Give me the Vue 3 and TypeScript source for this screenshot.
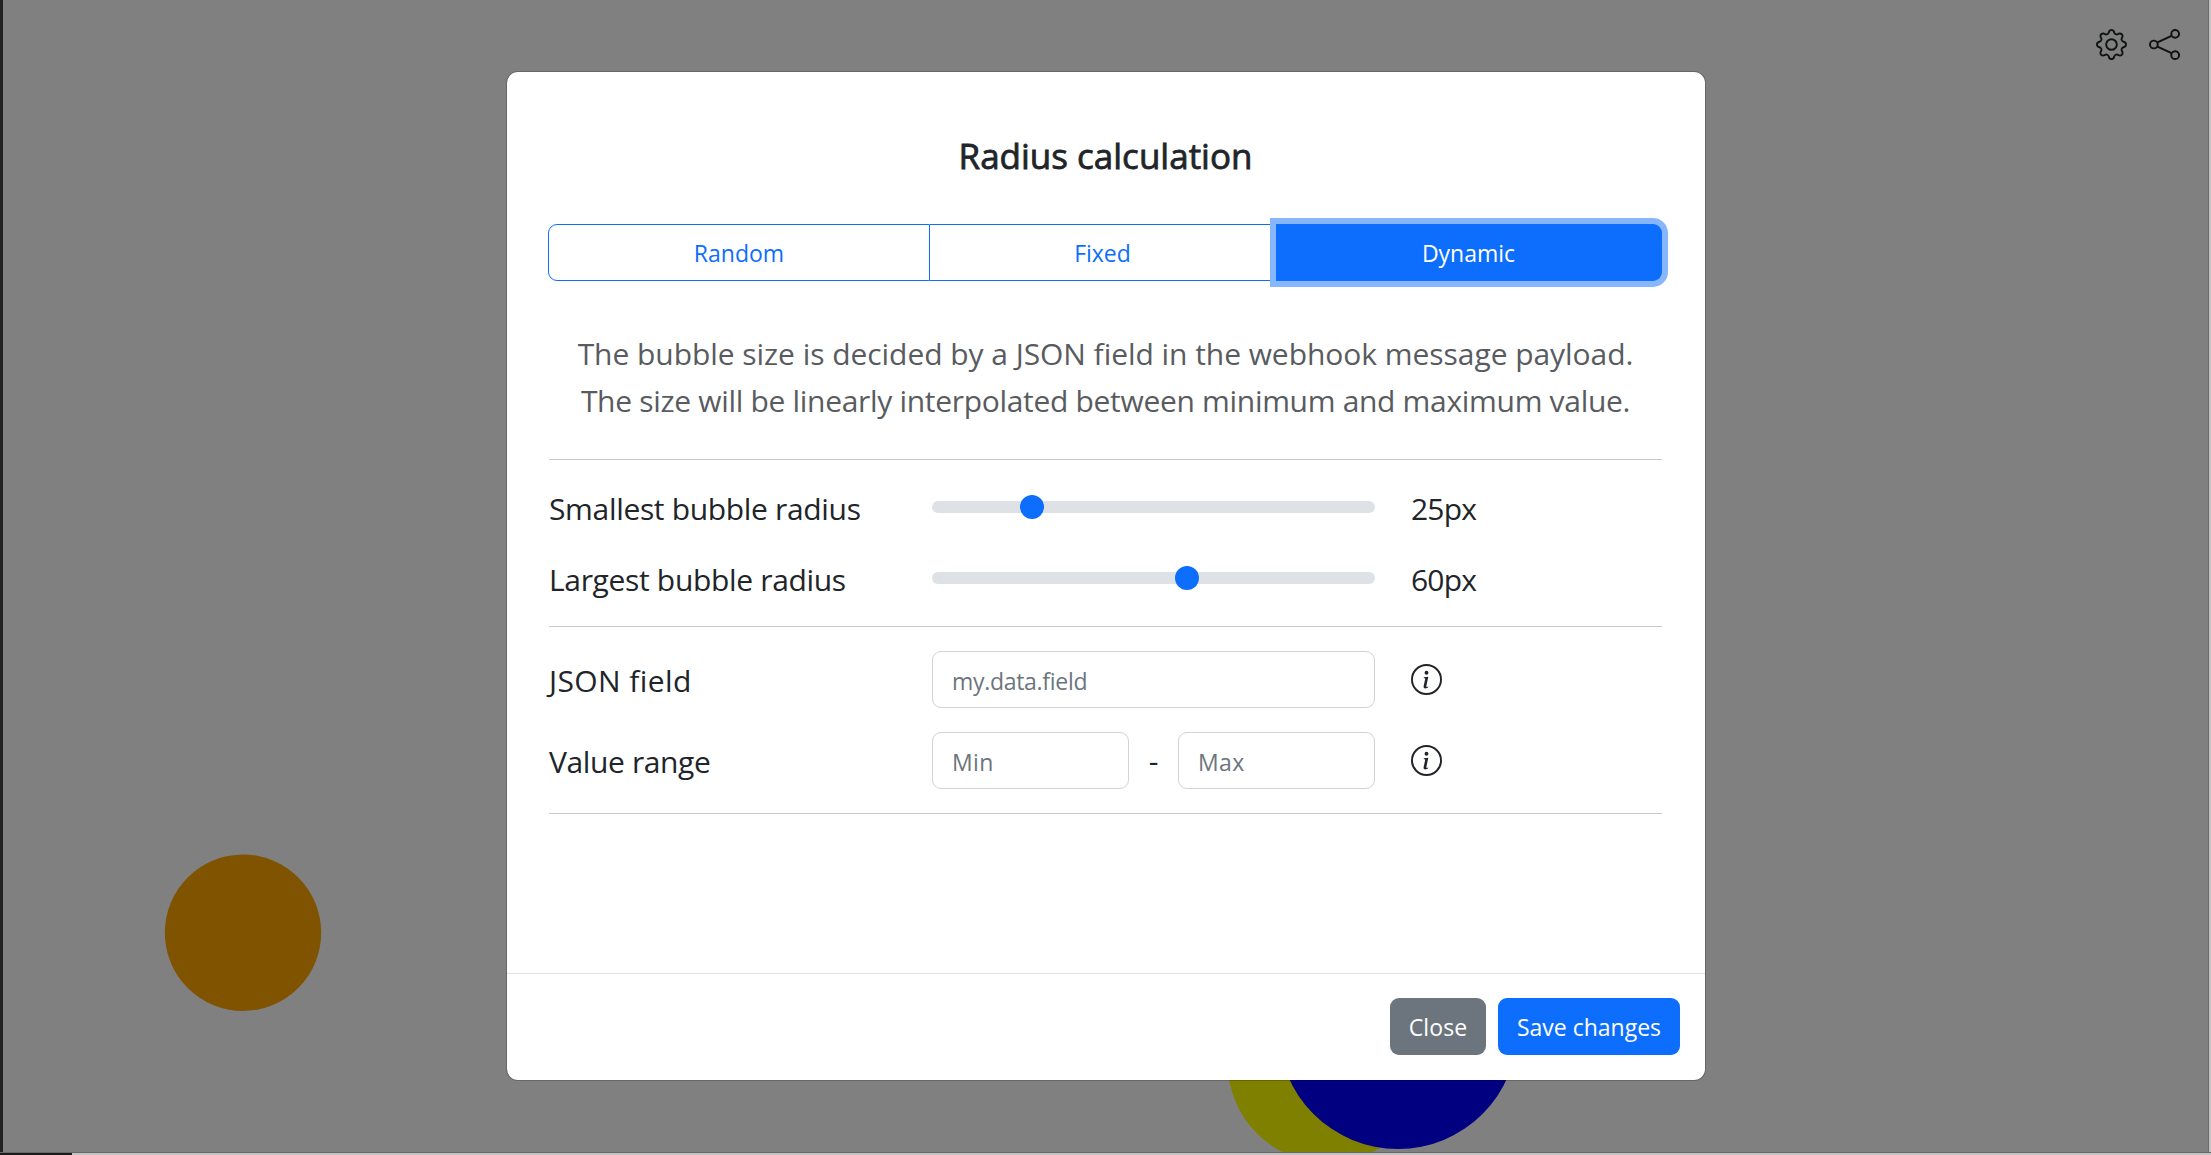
<script setup lang="ts">
import { ref } from 'vue'

interface Mode { name: string; width: number }
interface Bubble { x: number; y: number; r: number; color: string }

const modes: Mode[] = [
  { name: 'Random', width: 382 },
  { name: 'Fixed', width: 346 },
  { name: 'Dynamic', width: 386 },
]
const active = ref('Dynamic')
const smallest = ref(25)
const largest = ref(60)
const field = ref('')
const min = ref('')
const max = ref('')

const bubbles: Bubble[] = [
  { x: 243, y: 932.7, r: 78.2, color: '#ffa600' },
  { x: 1327.5, y: 1063, r: 99.7, color: '#ffff00' },
  { x: 1398, y: 1029.5, r: 119.5, color: '#0000ff' },
]
</script>

<template>
  <div class="page">
    <svg class="canvas" width="2211" height="1155">
      <rect width="2211" height="1155" fill="#ffffff" />
      <circle v-for="b in bubbles" :key="b.color" :cx="b.x" :cy="b.y" :r="b.r" :fill="b.color" />
    </svg>
    <div class="toolbar">
      <svg class="icon" viewBox="0 0 16 16" fill="currentColor">
        <path d="M8 4.754a3.246 3.246 0 1 0 0 6.492 3.246 3.246 0 0 0 0-6.492zM5.754 8a2.246 2.246 0 1 1 4.492 0 2.246 2.246 0 0 1-4.492 0z" />
        <path d="M9.796 1.343c-.527-1.79-3.065-1.79-3.592 0l-.094.319a.873.873 0 0 1-1.255.52l-.292-.16c-1.64-.892-3.433.902-2.54 2.541l.159.292a.873.873 0 0 1-.52 1.255l-.319.094c-1.79.527-1.79 3.065 0 3.592l.319.094a.873.873 0 0 1 .52 1.255l-.16.292c-.892 1.64.901 3.434 2.541 2.54l.292-.159a.873.873 0 0 1 1.255.52l.094.319c.527 1.79 3.065 1.79 3.592 0l.094-.319a.873.873 0 0 1 1.255-.52l.292.16c1.64.893 3.434-.902 2.54-2.541l-.159-.292a.873.873 0 0 1 .52-1.255l.319-.094c1.79-.527 1.79-3.065 0-3.592l-.319-.094a.873.873 0 0 1-.52-1.255l.16-.292c.893-1.64-.902-3.433-2.541-2.54l-.292.159a.873.873 0 0 1-1.255-.52l-.094-.319zm-2.633.283c.246-.835 1.428-.835 1.674 0l.094.319a1.873 1.873 0 0 0 2.693 1.115l.291-.16c.764-.415 1.6.42 1.184 1.185l-.159.292a1.873 1.873 0 0 0 1.116 2.692l.318.094c.835.246.835 1.428 0 1.674l-.319.094a1.873 1.873 0 0 0-1.115 2.693l.16.291c.415.764-.42 1.6-1.185 1.184l-.291-.159a1.873 1.873 0 0 0-2.693 1.116l-.094.318c-.246.835-1.428.835-1.674 0l-.094-.319a1.873 1.873 0 0 0-2.692-1.115l-.292.16c-.764.415-1.6-.42-1.184-1.185l.159-.291A1.873 1.873 0 0 0 1.945 8.93l-.319-.094c-.835-.246-.835-1.428 0-1.674l.319-.094A1.873 1.873 0 0 0 3.06 4.377l-.16-.292c-.415-.764.42-1.6 1.185-1.184l.292.159a1.873 1.873 0 0 0 2.692-1.115l.094-.319z" />
      </svg>
      <svg class="icon" viewBox="0 0 16 16" fill="currentColor">
        <path d="M13.5 1a1.5 1.5 0 1 0 0 3 1.5 1.5 0 0 0 0-3zM11 2.5a2.5 2.5 0 1 1 .603 1.628l-6.718 3.12a2.499 2.499 0 0 1 0 1.504l6.718 3.12a2.5 2.5 0 1 1-.488.876l-6.718-3.12a2.5 2.5 0 1 1 0-3.256l6.718-3.12A2.5 2.5 0 0 1 11 2.5zm-8.5 4a1.5 1.5 0 1 0 0 3 1.5 1.5 0 0 0 0-3zm11 5.5a1.5 1.5 0 1 0 0 3 1.5 1.5 0 0 0 0-3z" />
      </svg>
    </div>
    <div class="backdrop"></div>
    <div class="edge left"></div>
    <div class="edge right"></div>
    <div class="edge bottom"></div>

    <div class="modal">
      <div class="body">
        <h4 class="title">Radius calculation</h4>
        <div class="group">
          <button
            v-for="m in modes"
            :key="m.name"
            class="mode"
            :class="{ active: m.name === active }"
            :style="{ width: m.width + 'px' }"
            @click="active = m.name"
          >{{ m.name }}</button>
        </div>
        <p class="about">
          <span class="line one">The bubble size is decided by a JSON field in the webhook message payload.</span>
          <span class="line two">The size will be linearly interpolated between minimum and maximum value.</span>
        </p>
        <hr>
        <div class="rows">
          <div class="row">
            <label class="tight">Smallest bubble radius</label>
            <input v-model="smallest" class="range" type="range" min="5" max="100">
            <span class="value">{{ smallest }}px</span>
          </div>
          <div class="row">
            <label class="tight">Largest bubble radius</label>
            <input v-model="largest" class="range" type="range" min="5" max="100">
            <span class="value">{{ largest }}px</span>
          </div>
        </div>
        <hr>
        <div class="rows fields">
          <div class="row">
            <label class="wide">JSON field</label>
            <input v-model="field" class="input" placeholder="my.data.field">
            <svg class="icon info" viewBox="0 0 16 16" fill="currentColor">
              <path d="M8 15A7 7 0 1 1 8 1a7 7 0 0 1 0 14zm0 1A8 8 0 1 0 8 0a8 8 0 0 0 0 16z" />
              <path d="m8.930 6.588-2.290.287-.082.380.450.083c.294.070.352.176.288.469l-.738 3.468c-.194.897.105 1.319.808 1.319.545 0 1.178-.252 1.465-.598l.088-.416c-.2.176-.492.246-.686.246-.275 0-.375-.193-.304-.533L8.930 6.588zM9 4.500a1 1 0 1 1-2 0 1 1 0 0 1 2 0z" />
            </svg>
          </div>
          <div class="row">
            <label class="narrow">Value range</label>
            <div class="pair">
              <input v-model="min" class="input short" placeholder="Min">
              <span class="dash">-</span>
              <input v-model="max" class="input short" placeholder="Max">
            </div>
            <svg class="icon info" viewBox="0 0 16 16" fill="currentColor">
              <path d="M8 15A7 7 0 1 1 8 1a7 7 0 0 1 0 14zm0 1A8 8 0 1 0 8 0a8 8 0 0 0 0 16z" />
              <path d="m8.930 6.588-2.290.287-.082.380.450.083c.294.070.352.176.288.469l-.738 3.468c-.194.897.105 1.319.808 1.319.545 0 1.178-.252 1.465-.598l.088-.416c-.2.176-.492.246-.686.246-.275 0-.375-.193-.304-.533L8.930 6.588zM9 4.500a1 1 0 1 1-2 0 1 1 0 0 1 2 0z" />
            </svg>
          </div>
        </div>
        <hr>
      </div>
      <div class="footer">
        <button class="btn close">Close</button>
        <button class="btn save">Save changes</button>
      </div>
    </div>
  </div>
</template>

<style>
body { overflow: hidden; }
</style>

<style scoped>
.page {
  position: relative;
  display: flow-root;
  width: 2211px;
  height: 1155px;
  overflow: hidden;
  box-sizing: border-box;
  font-family: "Open Sans", "Noto Sans", sans-serif;
  color: #212529;
}
.page * { box-sizing: border-box; }
.canvas, .backdrop { position: absolute; top: 0; left: 0; width: 2211px; height: 1155px; }
.backdrop { background: rgba(0, 0, 0, 0.498); }
.edge { position: absolute; }
.edge.left { left: 0; top: 0; width: 3px; height: 1155px; background: #222; }
.edge.right { right: 0; top: 0; width: 3px; height: 1155px; background: #c3c3c3; border-left: 1px solid #696969; }
.edge.bottom {
  left: 0; bottom: 0; width: 2211px; height: 3px;
  border-top: 1px solid #696969;
  background: linear-gradient(to right, #1c1c1c 72px, #c3c3c3 72px);
}
.toolbar { position: absolute; top: 29px; left: 2095.5px; display: flex; gap: 22px; }
.icon { display: block; width: 31px; height: 31px; }
.toolbar .icon { color: #212529; }

.modal {
  position: relative;
  display: flex;
  flex-direction: column;
  width: 1200px;
  height: 1010px;
  margin: 71px 0 0 506px;
  border: 1px solid rgba(0, 0, 0, 0.2);
  border-radius: 12px;
  background: #fff;
  background-clip: padding-box;
}
.body { flex: 1; padding: 62px 43px 0 42px; }
.title {
  margin: 0 0 46px;
  font-size: 35px;
  font-weight: 500;
  line-height: 44px;
  letter-spacing: 0;
  text-align: center;
  -webkit-text-stroke: 0.8px currentColor;
}
.group { display: flex; height: 57px; margin-left: -1px; }
.mode {
  flex: none;
  height: 57px;
  padding: 2px 0 0;
  border: 1px solid #0d6efd;
  background: #fff;
  color: #0d6efd;
  font: 400 23px/53px "Open Sans", sans-serif;
}
.mode + .mode { border-left: 0; }
.mode:first-child { border-radius: 9px 0 0 9px; }
.mode:last-child { border-radius: 0 9px 9px 0; }
.mode.active { background: #0d6efd; color: #fff; box-shadow: 0 0 0 6px #86b7fe; }
.about { margin: 49px 0 35px; color: #595c5f; font-size: 30px; line-height: 47px; text-align: center; }
.line { display: block; white-space: nowrap; }
.one { letter-spacing: -0.05px; }
.two { letter-spacing: -0.31px; }
hr { height: 1px; margin: 0; border: 0; background: #c8c9ca; }
.rows { display: flex; flex-direction: column; gap: 24px; padding: 25px 0 23px; }
.rows.fields { padding: 24px 0; }
.row { display: grid; grid-template-columns: 383px 443px 1fr; align-items: center; font-size: 30px; line-height: 47px; }
.fields label { padding-top: 2px; }
.tight { letter-spacing: -0.33px; }
.wide { letter-spacing: 0.4px; }
.narrow { letter-spacing: -0.38px; }
.value { padding-left: 36px; letter-spacing: -0.8px; }
.range { width: 443px; height: 24px; margin: 0 0 3px; appearance: none; background: transparent; }
.range::-webkit-slider-runnable-track { height: 12px; border-radius: 6px; background: #dee2e6; }
.range::-webkit-slider-thumb { appearance: none; width: 24px; height: 24px; margin-top: -6px; border: 0; border-radius: 50%; background: #0d6efd; }
.input {
  width: 100%;
  height: 57px;
  padding: 2px 18px 0 19px;
  border: 1px solid #ced4da;
  border-radius: 9px;
  background: #fff;
  color: #212529;
  font: 400 23px/34px "Open Sans", sans-serif;
  letter-spacing: -0.3px;
}
.input::placeholder { color: #6c757d; opacity: 1; }
.pair { display: flex; align-items: center; justify-content: space-between; }
.input.short { width: 197px; letter-spacing: 0.4px; }
.info { margin-left: 36px; }
.footer {
  display: flex;
  justify-content: flex-end;
  gap: 12px;
  padding: 24px 25px 25px;
  border-top: 1px solid #dee2e6;
}
.btn { height: 57px; padding: 2px 0 0; border: 0; border-radius: 9px; color: #fff; font: 400 23px/55px "Open Sans", sans-serif; }
.close { width: 96px; background: #6c757d; letter-spacing: 0.1px; }
.save { width: 182px; background: #0d6efd; }
</style>
